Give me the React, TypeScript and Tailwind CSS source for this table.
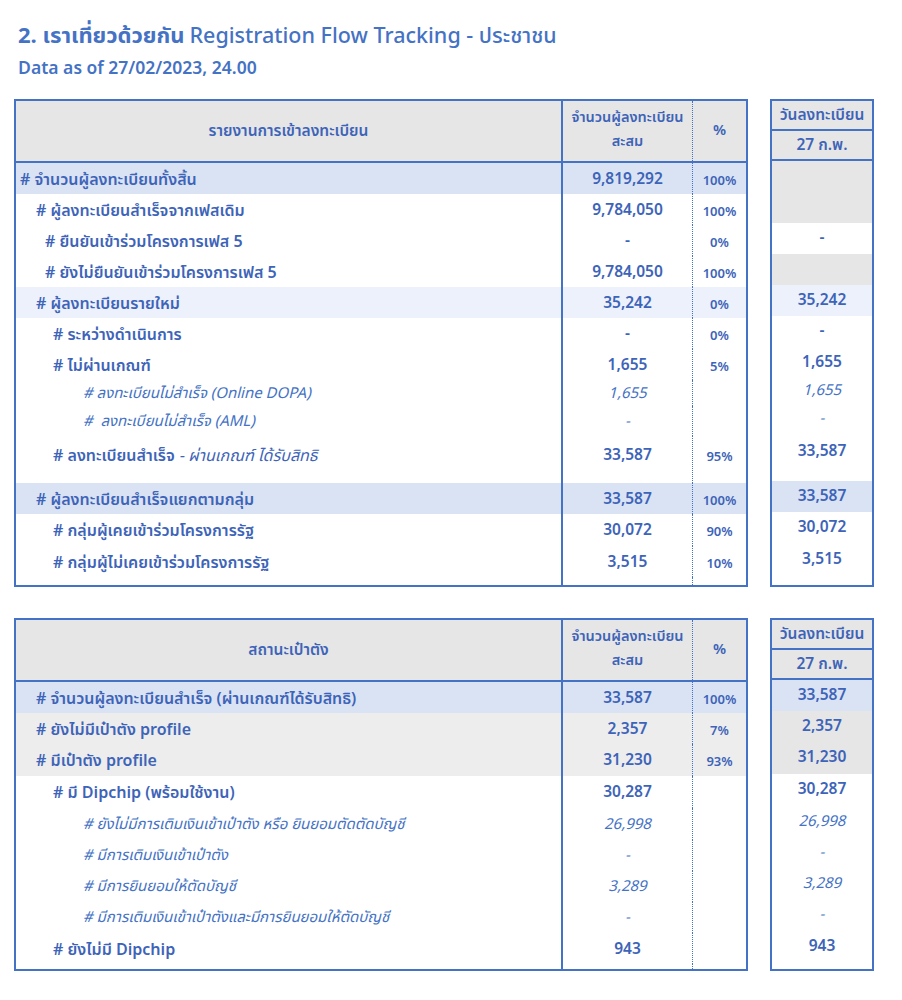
import React from "react";

type Row = {
  label: React.ReactNode;
  indent: number;
  kind?: "bold" | "italic" | "normal";
  num: string;
  pct?: string;
  bg?: string;
  rVal?: string;
  rBg?: string;
  h: number;
  top?: boolean;
};

const bgClass: Record<string, string> = {
  blue: "bg-[#dae3f3]",
  light: "bg-[#edf1fb]",
  gray: "bg-[#ededed]",
  hdr: "bg-[#e7e6e6]",
  none: "bg-white",
};

const topRows: Row[] = [
  { label: "# จำนวนผู้ลงทะเบียนทั้งสิ้น", indent: 4, kind: "bold", num: "9,819,292", pct: "100%", bg: "blue", rVal: "", rBg: "hdr", h: 31 },
  { label: "# ผู้ลงทะเบียนสำเร็จจากเฟสเดิม", indent: 20, kind: "bold", num: "9,784,050", pct: "100%", rVal: "", rBg: "hdr", h: 31 },
  { label: "# ยืนยันเข้าร่วมโครงการเฟส 5", indent: 29, kind: "bold", num: "-", pct: "0%", rVal: "-", h: 31 },
  { label: "# ยังไม่ยืนยันเข้าร่วมโครงการเฟส 5", indent: 29, kind: "bold", num: "9,784,050", pct: "100%", rVal: "", rBg: "hdr", h: 31 },
  { label: "# ผู้ลงทะเบียนรายใหม่", indent: 20, kind: "bold", num: "35,242", pct: "0%", bg: "light", rVal: "35,242", rBg: "light", h: 31 },
  { label: "# ระหว่างดำเนินการ", indent: 37, kind: "bold", num: "-", pct: "0%", rVal: "-", h: 31 },
  { label: "# ไม่ผ่านเกณฑ์", indent: 37, kind: "bold", num: "1,655", pct: "5%", rVal: "1,655", h: 31 },
  { label: "# ลงทะเบียนไม่สำเร็จ (Online DOPA)", indent: 67, kind: "italic", num: "1,655", rVal: "1,655", h: 26 },
  { label: "#  ลงทะเบียนไม่สำเร็จ (AML)", indent: 67, kind: "italic", num: "-", rVal: "-", h: 30 },
  {
    label: (
      <>
        # ลงทะเบียนสำเร็จ<span className="font-normal italic"> - ผ่านเกณฑ์ ได้รับสิทธิ</span>
      </>
    ),
    indent: 37,
    kind: "bold",
    num: "33,587",
    pct: "95%",
    rVal: "33,587",
    h: 47,
    top: true,
  },
  { label: "# ผู้ลงทะเบียนสำเร็จแยกตามกลุ่ม", indent: 20, kind: "bold", num: "33,587", pct: "100%", bg: "blue", rVal: "33,587", rBg: "blue", h: 31 },
  { label: "# กลุ่มผู้เคยเข้าร่วมโครงการรัฐ", indent: 37, kind: "bold", num: "30,072", pct: "90%", rVal: "30,072", h: 32 },
  { label: "# กลุ่มผู้ไม่เคยเข้าร่วมโครงการรัฐ", indent: 37, kind: "bold", num: "3,515", pct: "10%", rVal: "3,515", h: 31 },
];

const walletRows: Row[] = [
  { label: "# จำนวนผู้ลงทะเบียนสำเร็จ (ผ่านเกณฑ์ได้รับสิทธิ)", indent: 20, kind: "bold", num: "33,587", pct: "100%", bg: "blue", rVal: "33,587", rBg: "blue", h: 31 },
  { label: "# ยังไม่มีเป๋าตัง profile", indent: 20, kind: "bold", num: "2,357", pct: "7%", bg: "gray", rVal: "2,357", rBg: "hdr", h: 31 },
  { label: "# มีเป๋าตัง profile", indent: 20, kind: "bold", num: "31,230", pct: "93%", bg: "gray", rVal: "31,230", rBg: "hdr", h: 32 },
  { label: "# มี Dipchip (พร้อมใช้งาน)", indent: 37, kind: "bold", num: "30,287", rVal: "30,287", h: 32 },
  { label: "# ยังไม่มีการเติมเงินเข้าเป๋าตัง หรือ ยินยอมตัดตัดบัญชี", indent: 67, kind: "italic", num: "26,998", rVal: "26,998", h: 32 },
  { label: "# มีการเติมเงินเข้าเป๋าตัง", indent: 67, kind: "italic", num: "-", rVal: "-", h: 31 },
  { label: "# มีการยินยอมให้ตัดบัญชี", indent: 67, kind: "italic", num: "3,289", rVal: "3,289", h: 31 },
  { label: "# มีการเติมเงินเข้าเป๋าตังและมีการยินยอมให้ตัดบัญชี", indent: 67, kind: "italic", num: "-", rVal: "-", h: 31 },
  { label: "# ยังไม่มี Dipchip", indent: 37, kind: "bold", num: "943", rVal: "943", h: 31 },
];

const textKind = (k?: string) =>
  k === "italic"
    ? "italic font-normal text-[15px] text-[#4472c4]"
    : "font-semibold text-[16px] text-[#3d64b8]";

const numKind = (k?: string) =>
  k === "italic"
    ? "italic font-normal text-[15px] text-[#4472c4]"
    : "font-semibold text-[15.5px] text-[#3d64b8]";

const MainTable = ({ title, rows, spacer }: { title: string; rows: Row[]; spacer: number }) => {
  return (
    <div className="w-[734px] border-2 border-[#4472c4] flex flex-col">
      <div className="flex h-[62px] bg-[#e7e6e6] border-b-2 border-[#4472c4] font-semibold text-[#3d64b8]">
        <div className="w-[547px] flex items-center justify-center border-r-2 border-[#4472c4] text-[15.5px] pt-[2px]">
          {title}
        </div>
        <div className="w-[130px] flex flex-col items-center justify-center border-r border-dotted border-[#4472c4] leading-[24px] text-[14.5px] pb-[2px]">
          <span>จำนวนผู้ลงทะเบียน</span>
          <span>สะสม</span>
        </div>
        <div className="flex-1 flex items-center justify-center text-[15px]">%</div>
      </div>
      {rows.map((r, i) => (
        <div key={i} className={`flex ${bgClass[r.bg ?? "none"]}`} style={{ height: r.h }}>
          <div
            className={`w-[547px] flex border-r-2 border-[#4472c4] whitespace-pre ${r.top ? "items-start pt-[8px]" : "items-center pt-[2px]"} ${textKind(r.kind)}`}
            style={{ paddingLeft: r.indent }}
          >
            {r.label}
          </div>
          <div
            className={`w-[130px] flex justify-center border-r border-dotted border-[#4472c4] ${r.top ? "items-start pt-[8px]" : "items-center pt-[2px]"} ${numKind(r.kind)}`}
          >
            {r.num}
          </div>
          <div
            className={`flex-1 flex justify-center font-semibold text-[13px] text-[#3d64b8] ${r.top ? "items-start pt-[12px]" : "items-center pt-[6px]"}`}
          >
            {r.pct}
          </div>
        </div>
      ))}
      <div className="flex" style={{ height: spacer }}>
        <div className="w-[547px] border-r-2 border-[#4472c4]" />
        <div className="w-[130px] border-r border-dotted border-[#4472c4]" />
        <div className="flex-1" />
      </div>
    </div>
  );
};

const DayTable = ({ rows, spacer }: { rows: Row[]; spacer: number }) => {
  return (
    <div className="w-[104px] border-2 border-[#4472c4] flex flex-col">
      <div className="h-[30px] bg-[#e7e6e6] border-b-2 border-[#4472c4] flex items-center justify-center pt-[2px] font-semibold text-[15.5px] text-[#3d64b8]">
        วันลงทะเบียน
      </div>
      <div className="h-[30px] bg-[#e7e6e6] border-b-2 border-[#4472c4] flex items-center justify-center pt-[2px] font-semibold text-[15.5px] text-[#3d64b8]">
        27 ก.พ.
      </div>
      {rows.map((r, i) => (
        <div
          key={i}
          className={`flex justify-center ${r.top ? "items-start pt-[6px]" : "items-center"} ${bgClass[r.rBg ?? "none"]} ${numKind(r.kind)}`}
          style={{ height: r.h }}
        >
          {r.rVal}
        </div>
      ))}
      <div style={{ height: spacer }} />
    </div>
  );
};

export default function App() {
  return (
    <div
      className="w-[902px] h-[1000px] bg-white text-[#4472c4]"
      style={{ fontFamily: '"Noto Sans Thai", "Noto Sans", "Liberation Sans", sans-serif' }}
    >
      <div className="pl-[18px] pt-[21px] h-[99px]">
        <div className="flex items-baseline gap-[5px] leading-[32px]">
          <span className="text-[22px] font-bold text-[#4472c4]">2. เราเที่ยวด้วยกัน</span>
          <span className="text-[21.5px] font-medium text-[#4472c4]">Registration Flow Tracking - ประชาชน</span>
        </div>
        <div className="text-[17.5px] font-semibold leading-[32px] text-[#4472c4]">Data as of 27/02/2023, 24.00</div>
      </div>
      <div className="flex flex-col gap-[31px] pl-[14px]">
        <div className="flex gap-[22px]">
          <MainTable title="รายงานการเข้าลงทะเบียน" rows={topRows} spacer={8} />
          <DayTable rows={topRows} spacer={8} />
        </div>
        <div className="flex gap-[22px]">
          <MainTable title="สถานะเป๋าตัง" rows={walletRows} spacer={5} />
          <DayTable rows={walletRows} spacer={5} />
        </div>
      </div>
    </div>
  );
}
